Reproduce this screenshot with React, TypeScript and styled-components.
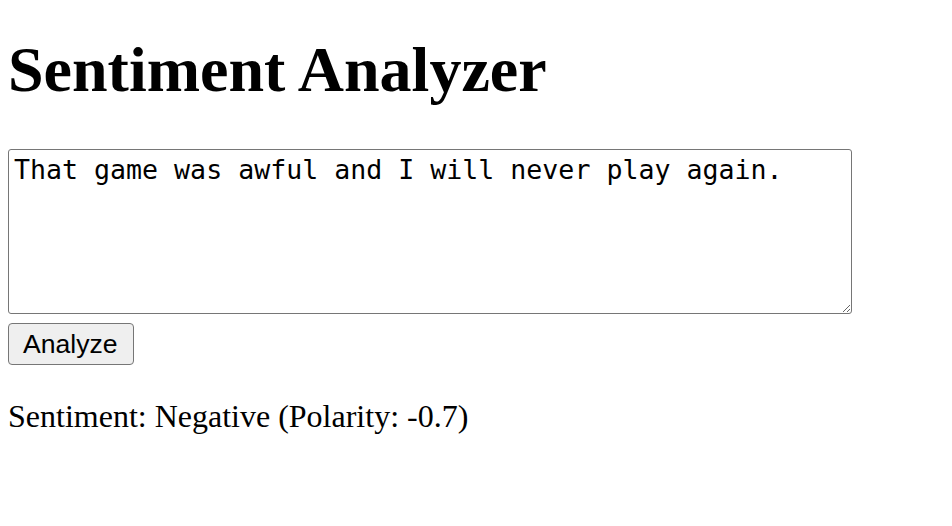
import styled, { createGlobalStyle } from 'styled-components'

const Global = createGlobalStyle`
  html, body {
    margin: 0;
    padding: 0;
    background: #ffffff;
  }
`;

const Page = styled.div`
  padding: 0 8px;
  font-family: "Liberation Serif", "Times New Roman", serif;
  color: #000;
`;

const Title = styled.h1`
  margin: 0;
  padding-top: 34px;
  font-size: 64px;
  font-weight: bold;
  line-height: 72px;
`;

const Form = styled.div`
  display: flex;
  flex-direction: column;
  align-items: flex-start;
  gap: 9px;
  margin-top: 43px;
`;

const TextBox = styled.textarea`
  display: block;
  box-sizing: border-box;
  width: 844px;
  height: 165px;
  margin: 0;
  padding: 4px 5px 2px;
  border: 1px solid #767676;
  border-radius: 3px;
  font-family: "DejaVu Sans Mono", "Liberation Mono", monospace;
  font-size: 26.6px;
  line-height: 1.2;
  color: #000;
  resize: both;
`;

const Button = styled.button`
  box-sizing: border-box;
  height: 42px;
  padding: 0 15px 0 14px;
  border: 1px solid #767676;
  border-radius: 4px;
  background: #efefef;
  font-family: "Liberation Sans", Arial, sans-serif;
  font-size: 26.6px;
  color: #000;
`;

const Result = styled.p`
  margin: 33px 0 0;
  font-size: 32px;
  line-height: 37px;
`;

const App = () => {
  return (
    <>
      <Global />
      <Page>
        <Title>Sentiment Analyzer</Title>
        <Form>
          <TextBox defaultValue={"That game was awful and I will never play again."} />
          <Button>Analyze</Button>
        </Form>
        <Result>Sentiment: Negative (Polarity: -0.7)</Result>
      </Page>
    </>
  )
}

export default App;
